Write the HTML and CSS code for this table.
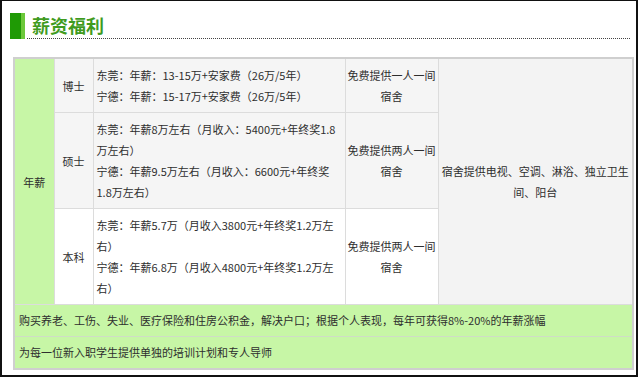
FILE: index.html
```html
<!DOCTYPE html>
<html lang="zh">
<head>
<meta charset="utf-8">
<link rel="stylesheet" href="styles.css">
</head>
<body>
<div class="frame">
  <div class="title-row">
    <span class="bar"></span>
    <h2 class="title">薪资福利</h2>
  </div>
  <table class="salary">
    <colgroup>
      <col class="c1"><col class="c2"><col class="c3"><col class="c4"><col class="c5">
    </colgroup>
    <tr class="r1">
      <td class="green center" rowspan="3">年薪</td>
      <td class="center">博士</td>
      <td class="detail">东莞：年薪：13-15万+安家费（26万/5年）<br>宁德：年薪：15-17万+安家费（26万/5年）</td>
      <td class="center nowrap">免费提供一人一间<br>宿舍</td>
      <td class="center grey nowrap" rowspan="3">宿舍提供电视、空调、淋浴、独立卫生<br>间、阳台</td>
    </tr>
    <tr class="r2">
      <td class="center">硕士</td>
      <td class="detail">东莞：年薪8万左右（月收入：5400元+年终奖1.8<br>万左右）<br>宁德：年薪9.5万左右（月收入：6600元+年终奖<br>1.8万左右）</td>
      <td class="center nowrap">免费提供两人一间<br>宿舍</td>
    </tr>
    <tr class="r3">
      <td class="center">本科</td>
      <td class="detail">东莞：年薪5.7万（月收入3800元+年终奖1.2万左<br>右）<br>宁德：年薪6.8万（月收入4800元+年终奖1.2万左<br>右）</td>
      <td class="center nowrap">免费提供两人一间<br>宿舍</td>
    </tr>
    <tr class="note">
      <td class="green" colspan="5">购买养老、工伤、失业、医疗保险和住房公积金，解决户口；根据个人表现，每年可获得8%-20%的年薪涨幅</td>
    </tr>
    <tr class="note">
      <td class="green" colspan="5">为每一位新入职学生提供单独的培训计划和专人导师</td>
    </tr>
  </table>
</div>
</body>
</html>
```

FILE: styles.css
```css
html, body {
  margin: 0;
  padding: 0;
  background: #fff;
}
.frame {
  box-sizing: border-box;
  width: 638px;
  height: 377px;
  border: 2px solid #111;
  border-top-width: 1px;
  background: #fff;
  padding: 12px 0 0 8px;
  font-family: "Noto Sans CJK SC", "Liberation Sans", sans-serif;
}
.title-row {
  display: flex;
  align-items: stretch;
  height: 26px;
  width: 620px;
}
.bar {
  width: 15px;
  background: linear-gradient(to right, #1f9a05 0, #1f9a05 70%, #6cc83a 72%, #6cc83a 100%);
  flex: none;
}
.title {
  flex: 1;
  margin: 0 0 0 2px;
  padding: 0 0 0 5px;
  border-bottom: 1px dotted #444;
  font-size: 18px;
  line-height: 24px;
  font-weight: bold;
  color: #3f9b1e;
}
.salary {
  margin: 18px 0 0 3px;
  width: 621px;
  table-layout: fixed;
  border-collapse: collapse;
  border: 2px solid #cfcfcf;
  font-size: 11px;
  color: #2e2e2e;
  line-height: 21px;
}
.c1 { width: 40px; }
.c2 { width: 39px; }
.c3 { width: 252px; }
.c4 { width: 93px; }
.c5 { width: 195px; }
.salary td {
  border: 1px solid #dcdcdc;
  padding: 6px 3px 5px;
  vertical-align: middle;
}
.salary .center {
  text-align: center;
}
.salary .detail,
.salary .nowrap {
  white-space: nowrap;
}
.salary .nowrap {
  padding-left: 0;
  padding-right: 0;
}
.r1 td, .r2 td { background: #f5f5f5; }
.r3 td { background: #fff; }
.salary td.grey { background: #f3f3f3; }
.salary td.green { background: #c7f6a6; }
.note td {
  padding: 5px 4px;
}
.salary .note td {
  border-color: #cfdcc6;
}
```
